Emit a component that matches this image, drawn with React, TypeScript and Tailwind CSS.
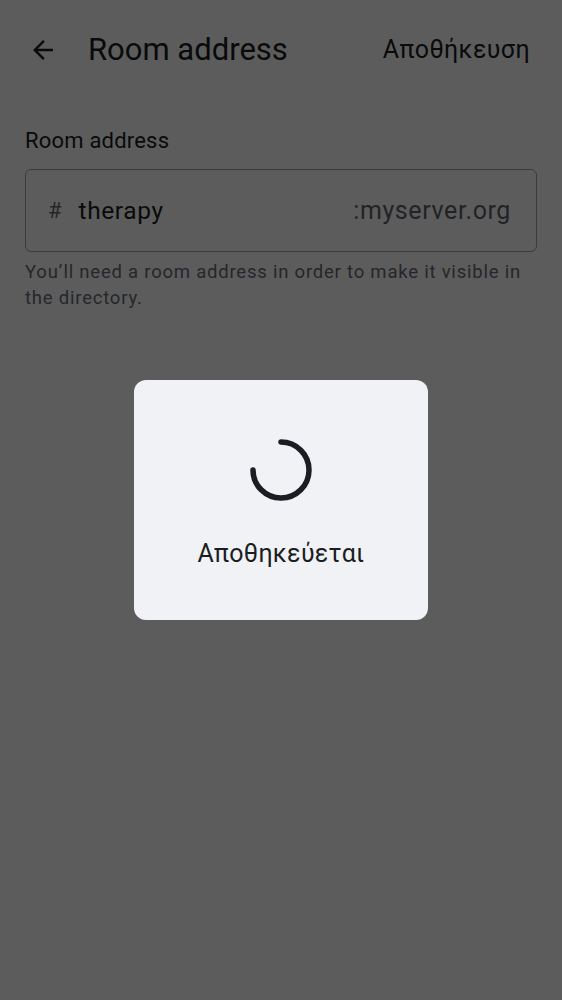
import React from "react";

export default function App() {
  return (
    <div
      className="relative h-[1000px] w-full overflow-hidden bg-white"
      style={{ fontFamily: "Roboto, 'Noto Sans', sans-serif" }}
    >
      {/* Page */}
      <div className="flex flex-col">
        <header className="flex h-[100px] items-center pl-[28px] pr-[32px]">
          <svg width="30" height="30" viewBox="0 0 24 24" className="text-[#1b1d22]">
            <path
              d="M20 11H7.83l5.59-5.59L12 4l-8 8 8 8 1.41-1.41L7.83 13H20v-2z"
              fill="currentColor"
            />
          </svg>
          <h1 className="ml-[30px] flex-1 text-[31px] leading-[36px] text-[#1b1d22]">Room address</h1>
          <button className="text-[25px] leading-[30px] tracking-[0.4px] text-[#1b1d22]">Αποθήκευση</button>
        </header>
        <div className="flex flex-col px-[25px]">
          <label className="mt-[28px] text-[22px] leading-[26px] tracking-[0.2px] text-[#1b1d22]">Room address</label>
          <div className="mt-[15px] flex h-[83px] items-center rounded-[6px] border border-[#9ea3ab] pl-[22px] pr-[25px]">
            <span className="text-[22px] text-[#656d77]">#</span>
            <span className="ml-[17px] flex-1 text-[24.5px] leading-[30px] tracking-[0.6px] text-[#1b1d22]">therapy</span>
            <span className="text-[25px] leading-[30px] tracking-[0.6px] text-[#5c636d]">:myserver.org</span>
          </div>
          <p className="mt-[7px] text-[18.5px] leading-[26px] tracking-[0.78px] text-[#656d77]">
            You’ll need a room address in order to make it visible in the directory.
          </p>
        </div>
      </div>

      {/* Scrim + dialog */}
      <div className="absolute inset-0 flex items-center justify-center bg-black/[0.64]">
        <div className="flex h-[240px] w-[294px] flex-col items-center rounded-[12px] bg-[#f0f2f5] pt-[57px]">
          <svg width="66" height="66" viewBox="0 0 66 66">
            <path
              d="M 33 5 A 28 28 0 1 1 5 33"
              fill="none"
              stroke="#1b1d22"
              strokeWidth="5.5"
              strokeLinecap="round"
            />
          </svg>
          <div className="mt-[36px] text-[25px] leading-[30px] tracking-[0.3px] text-[#1b1d22]">Αποθηκεύεται</div>
        </div>
      </div>
    </div>
  );
}
